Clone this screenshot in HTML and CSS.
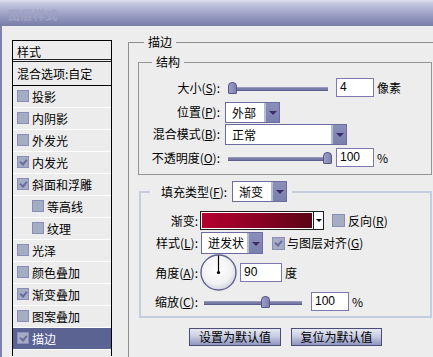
FILE: index.html
```html
<!DOCTYPE html>
<html lang="zh">
<head>
<meta charset="utf-8">
<title>图层样式</title>
<link rel="stylesheet" href="styles.css">
</head>
<body>
<div class="titlebar"><span class="title">图层样式</span></div>
<div class="window">
  <div class="sidebar">
    <div class="side-head">样式</div>
    <div class="side-blend">混合选项:自定</div>
    <div class="side-item"><span class="cb"></span>投影</div>
    <div class="side-item"><span class="cb"></span>内阴影</div>
    <div class="side-item"><span class="cb"></span>外发光</div>
    <div class="side-item"><span class="cb on"></span>内发光</div>
    <div class="side-item"><span class="cb on"></span>斜面和浮雕</div>
    <div class="side-item sub"><span class="cb"></span>等高线</div>
    <div class="side-item sub"><span class="cb"></span>纹理</div>
    <div class="side-item"><span class="cb"></span>光泽</div>
    <div class="side-item"><span class="cb"></span>颜色叠加</div>
    <div class="side-item"><span class="cb on"></span>渐变叠加</div>
    <div class="side-item"><span class="cb"></span>图案叠加</div>
    <div class="side-item selected"><span class="cb on"></span>描边</div>
    <div class="side-rest"></div>
  </div>
  <div class="content">
    <fieldset class="stroke">
      <legend class="glegend">描边</legend>
      <fieldset class="struct">
        <legend class="glegend">结构</legend>
        <div class="srow r1">
          <span class="lbl">大小(<u>S</u>):</span>
          <div class="slider s-struct"><div class="track"></div><div class="thumb" style="left:0px"></div></div>
          <div class="num n-struct">4</div><span class="unit">像素</span>
        </div>
        <div class="srow r2">
          <span class="lbl">位置(<u>P</u>):</span>
          <div class="select sel-pos"><span class="val">外部</span><span class="btn"></span></div>
        </div>
        <div class="srow r3">
          <span class="lbl">混合模式(<u>B</u>):</span>
          <div class="select sel-mode"><span class="val">正常</span><span class="btn"></span></div>
        </div>
        <div class="srow r4">
          <span class="lbl">不透明度(<u>O</u>):</span>
          <div class="slider s-struct"><div class="track"></div><div class="thumb" style="left:95px"></div></div>
          <div class="num n-struct">100</div><span class="unit">%</span>
        </div>
      </fieldset>
      <fieldset class="fill">
        <legend class="flegend">
          <span class="flbl">填充类型(<u>F</u>):</span>
          <div class="select sel-type"><span class="val">渐变</span><span class="btn"></span></div>
        </legend>
        <div class="frow f1">
          <span class="lbl2">渐变:</span>
          <div class="gradbox"><span class="grad"></span><span class="gradarrow"></span></div>
          <span class="cb big"></span><span class="cbtext">反向(<u>R</u>)</span>
        </div>
        <div class="frow f2">
          <span class="lbl2">样式(<u>L</u>):</span>
          <div class="select sel-style"><span class="val">迸发状</span><span class="btn"></span></div>
          <span class="cb big on"></span><span class="cbtext t-align">与图层对齐(<u>G</u>)</span>
        </div>
        <div class="frow f3">
          <span class="lbl2">角度(<u>A</u>):</span>
          <svg class="dial" width="37" height="37" viewBox="0 0 37 37">
            <defs>
              <radialGradient id="dg" cx="45%" cy="40%" r="60%">
                <stop offset="0" stop-color="#ffffff"/>
                <stop offset="0.7" stop-color="#f2f2f4"/>
                <stop offset="1" stop-color="#d4d6e0"/>
              </radialGradient>
            </defs>
            <circle cx="18.5" cy="18.5" r="17.5" fill="url(#dg)" stroke="#5d6290" stroke-width="1.4"/>
            <line x1="18.5" y1="1.5" x2="18.5" y2="18.5" stroke="#000" stroke-width="1.2"/>
            <circle cx="18.5" cy="18.5" r="1.6" fill="#000"/>
          </svg>
          <div class="num n-angle">90</div><span class="unit">度</span>
        </div>
        <div class="frow f4">
          <span class="lbl2">缩放(<u>C</u>):</span>
          <div class="slider s-scale"><div class="track"></div><div class="thumb" style="left:57px"></div></div>
          <div class="num n-scale">100</div><span class="unit">%</span>
        </div>
      </fieldset>
      <div class="buttons">
        <span class="pbtn b1">设置为默认值</span>
        <span class="pbtn b2">复位为默认值</span>
      </div>
    </fieldset>
  </div>
</div>
</body>
</html>
```
FILE: styles.css
```css
* { box-sizing: border-box; }
html, body {
  margin: 0;
  padding: 0;
  width: 433px;
  height: 357px;
  overflow: hidden;
  background: #ededed;
  font-family: "Noto Sans CJK SC", "Noto Sans", sans-serif;
  font-size: 12px;
  color: #000;
}
u { text-decoration: underline; text-underline-offset: 1px; }

.titlebar {
  height: 26px;
  background: linear-gradient(to bottom, #dfe1f0 0px, #c7cae2 3px, #acb0cf 10px, #8f95bb 18px, #7a80aa 25px, #777da8 26px);
  padding: 6px 0 0 8px;
}
.title {
  font-weight: bold;
  font-size: 12px;
  line-height: 14px;
  color: #9ea3c4;
  letter-spacing: 0.5px;
}

.window {
  display: flex;
  align-items: flex-start;
  border-left: 2px solid #7c82ae;
  height: 331px;
  overflow: hidden;
}

/* ---------- sidebar ---------- */
.sidebar {
  margin-left: 10px;
  margin-top: 14px;
  width: 100px;
  border: 1px solid #000;
  border-bottom: none;
  background: #ececec;
  flex-shrink: 0;
}
.side-head {
  height: 21px;
  line-height: 21px;
  padding-left: 4px;
  border-bottom: 3px double #222;
}
.side-blend {
  height: 24px;
  line-height: 23px;
  padding-left: 4px;
  border-bottom: 1px solid #000;
}
.side-item {
  height: 22px;
  line-height: 21px;
  border-bottom: 1px solid #fff;
  display: flex;
  align-items: center;
  padding-left: 4px;
  padding-bottom: 1px;
}
.side-item.sub { padding-left: 19px; }
.side-item.selected { background: #5b6393; color: #fff; }
.side-rest { height: 6px; }

.cb {
  width: 12px;
  height: 12px;
  margin-right: 3px;
  background: #a3aec2;
  border: 1px solid #8c8cba;
  flex-shrink: 0;
  position: relative;
  display: inline-block;
}
.cb.on::after {
  content: "";
  position: absolute;
  left: 2px;
  top: 2px;
  width: 5px;
  height: 3px;
  border-left: 2px solid #6c6aa0;
  border-bottom: 2px solid #6c6aa0;
  transform: rotate(-50deg);
  transform-origin: center;
}
.cb.big { width: 13px; height: 13px; }

/* ---------- content ---------- */
.content {
  margin-left: 16px;
  margin-top: 9px;
  flex: 1;
  min-width: 0;
}
fieldset { margin: 0; min-width: 0; }
.glegend {
  line-height: 14px;
  padding: 0 4px;
}
.stroke {
  width: 316px;
  border: 1px solid #8f8f8f;
  padding: 0 0 20px 0;
}
.stroke > .glegend { margin-left: 15px; }

.struct {
  margin: 6px 0 0 9px;
  width: 294px;
  border: 1px solid #959595;
  padding: 9px 0 7px 0;
}
.struct > .glegend { margin-left: 13px; }

.srow {
  display: flex;
  align-items: center;
}
.srow.r1 { height: 19px; }
.srow.r2 { height: 22px; margin-top: 4px; }
.srow.r3 { height: 22px; margin-top: 0; }
.srow.r4 { height: 19px; margin-top: 3px; }
.lbl {
  width: 81px;
  text-align: right;
  line-height: 14px;
  white-space: nowrap;
}
.srow .slider { margin-left: 8px; }
.srow .select { margin-left: 5px; }

.slider {
  position: relative;
  height: 14px;
}
.s-struct { width: 100px; }
.track {
  position: absolute;
  left: 0;
  right: 0;
  top: 6px;
  height: 4px;
  background: #7a7aa6;
  border-top: 1px solid #9a9ac0;
  border-bottom: 1px solid #5e5e8c;
}
.thumb {
  position: absolute;
  top: 1px;
  width: 9px;
  height: 12px;
  background: linear-gradient(to right, #9a9ec4, #7e82b0);
  border: 1px solid #56568a;
  border-radius: 4px 4px 1px 1px;
}

.num {
  height: 19px;
  background: #fff;
  border: 1px solid #7f78b0;
  font-family: "Liberation Sans", sans-serif;
  font-size: 12px;
  line-height: 17px;
  padding-left: 3px;
  color: #000;
}
.n-struct { width: 38px; margin-left: 8px; }
.unit { margin-left: 3px; line-height: 14px; }

.select {
  display: flex;
  height: 21px;
  background: #fff;
  border: 1px solid #6d6ca2;
}
.select .val {
  flex: 1;
  padding-left: 6px;
  line-height: 19px;
  white-space: nowrap;
}
.select .btn {
  width: 15px;
  background: linear-gradient(to bottom, #8a90ba, #7a80ac);
  border-left: 2px solid #b3bcd0;
  display: flex;
  align-items: center;
  justify-content: center;
}
.select .btn::after {
  content: "";
  width: 0;
  height: 0;
  border-left: 4px solid transparent;
  border-right: 4px solid transparent;
  border-top: 4px solid #3c2c6c;
  margin-top: 1px;
}
.sel-pos { width: 55px; }
.sel-mode { width: 122px; }
.sel-type { width: 55px; margin-left: 5px; }
.sel-style { width: 62px; height: 22px; margin-left: 3px; }
.sel-style .val { line-height: 20px; }

/* ---------- fill group ---------- */
.fill {
  margin: 6px 0 0 10px;
  width: 293px;
  border: 2px solid #c5cddf;
  padding: 9px 0 5px 0;
}
.flegend {
  display: flex;
  align-items: center;
  margin-left: 9px;
  padding: 0 5px 0 11px;
}
.flbl { line-height: 14px; white-space: nowrap; }

.frow { display: flex; align-items: center; }
.frow.f1 { height: 19px; }
.frow.f2 { height: 22px; margin-top: 2px; }
.frow.f3 { height: 37px; margin-top: 0; }
.frow.f4 { height: 19px; margin-top: 1px; }
.lbl2 {
  width: 57px;
  text-align: right;
  line-height: 14px;
  white-space: nowrap;
}

.gradbox {
  margin-left: 2px;
  width: 124px;
  height: 19px;
  border: 1px solid #1e1e1e;
  display: flex;
  background: #fff;
}
.grad {
  flex: 1;
  margin: 1px;
  background: linear-gradient(to right, #b4002e, #8c0024 50%, #5a0514);
}
.gradarrow {
  width: 10px;
  border-left: 1px solid #1e1e1e;
  display: flex;
  align-items: center;
  justify-content: center;
}
.gradarrow::after {
  content: "";
  border-left: 3px solid transparent;
  border-right: 3px solid transparent;
  border-top: 3px solid #000;
}
.f1 .cb.big { margin-left: 8px; }
.f2 .cb.big { margin-left: 9px; }
.cbtext { line-height: 14px; margin-left: 0; white-space: nowrap; }
.f2 .cbtext { margin-left: -1px; }

.dial { margin-left: 2px; display: block; }
.n-angle { width: 42px; margin-left: 3px; }

.s-scale { width: 98px; margin-left: 6px; }
.n-scale { width: 38px; margin-left: 9px; }

/* ---------- buttons ---------- */
.buttons {
  display: flex;
  gap: 10px;
  margin: 10px 0 0 60px;
}
.pbtn {
  height: 18px;
  line-height: 16px;
  text-align: center;
  border: 1px solid #4c4c78;
  background: linear-gradient(to bottom, #e6e8f3 0%, #c9cde3 45%, #a3a8cc 80%, #9297c2 100%);
  white-space: nowrap;
}
.b1 { width: 92px; }
.b2 { width: 91px; }
```
